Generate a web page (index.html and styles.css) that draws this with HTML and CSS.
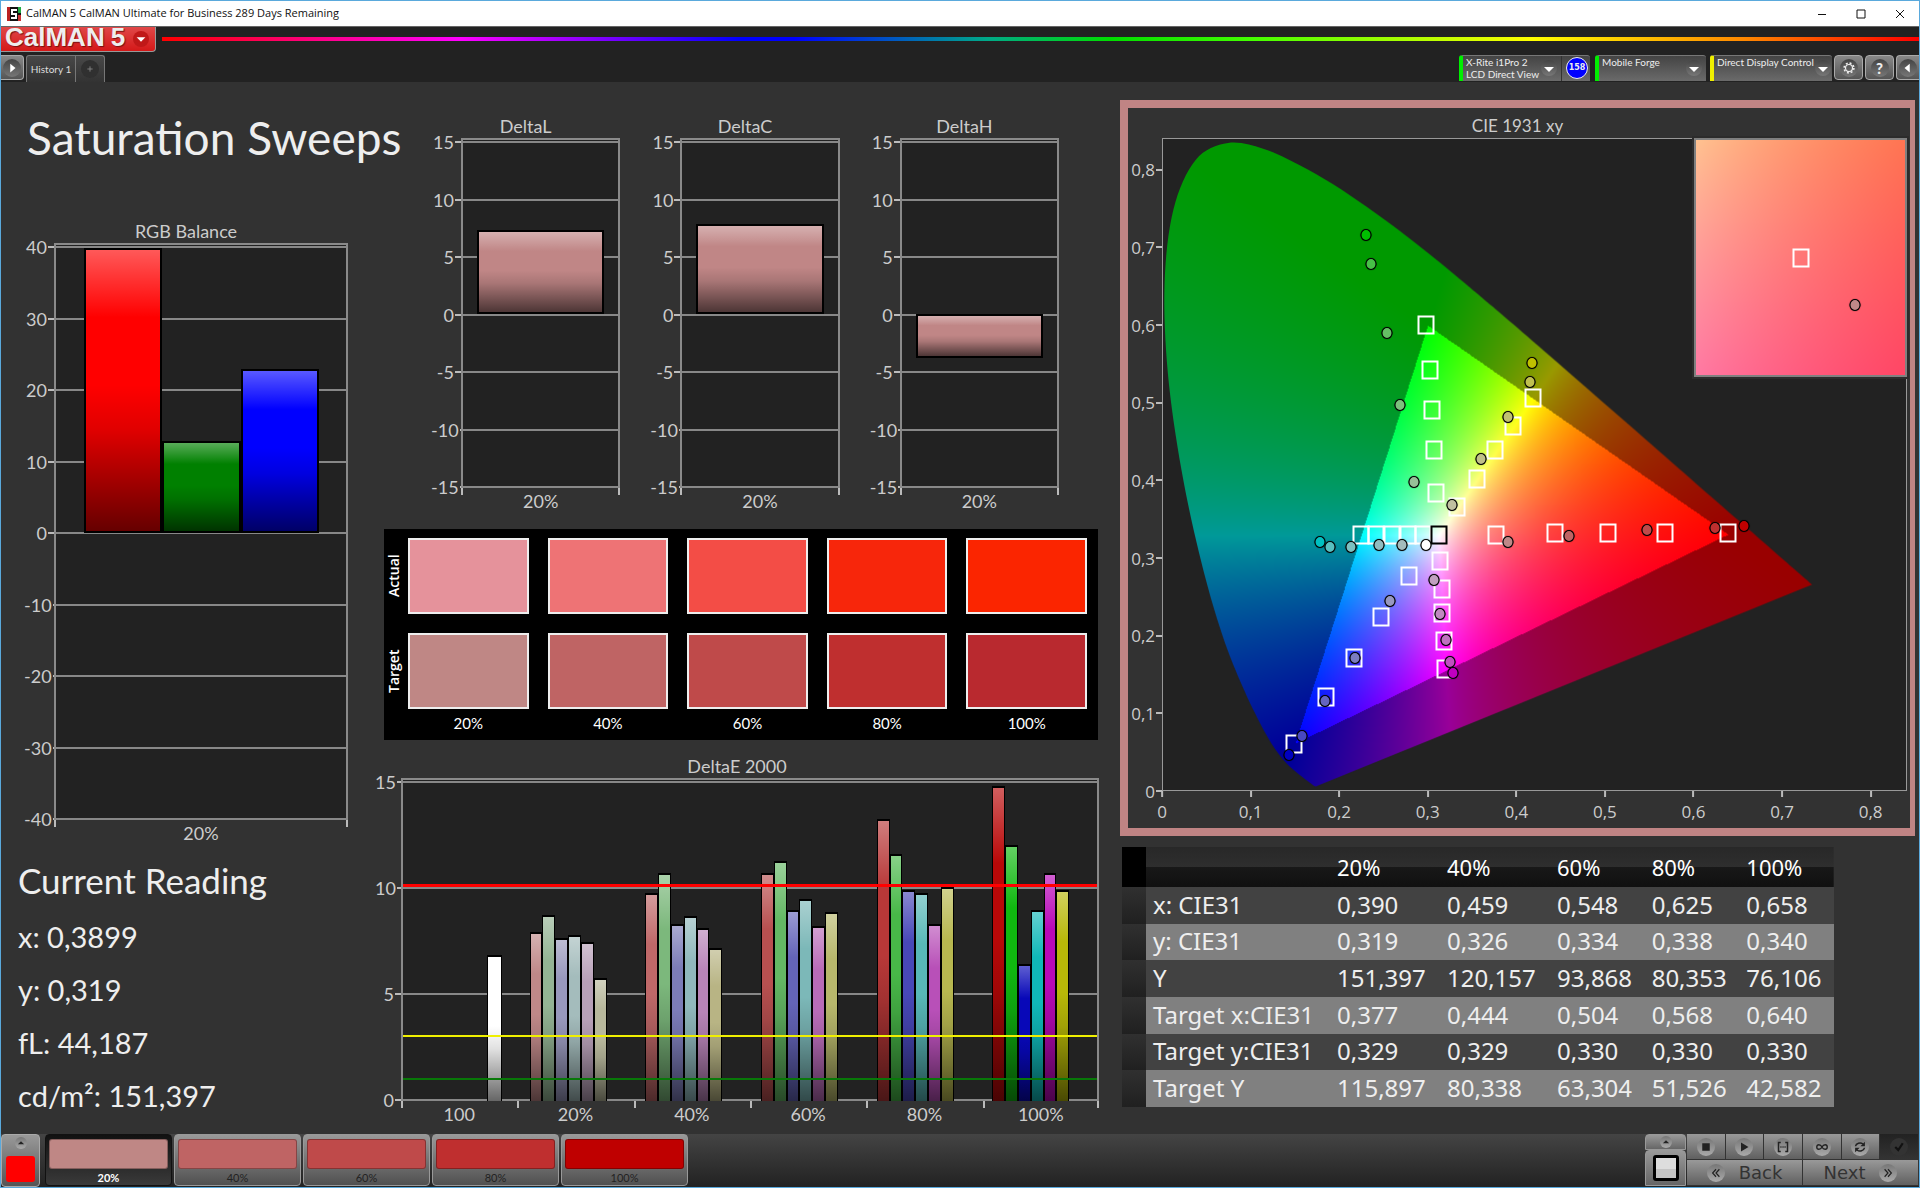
FILE: index.html
```html
<!DOCTYPE html>
<html lang="en">
<head>
<meta charset="utf-8">
<title>CalMAN 5 CalMAN Ultimate for Business 289 Days Remaining</title>
<link rel="stylesheet" href="styles.css">
</head>
<body>
<div class="app">
  <header class="titlebar">
    <svg class="app-icon" viewBox="0 0 14 14" aria-hidden="true"><rect width="14" height="14" fill="#111"/><path d="M0 0h3v14H0z" fill="#b22"/><path d="M11 0h3v6h-3z" fill="#2a4"/><path d="M11 8h3v6h-3z" fill="#c33"/><path d="M10 3H5v4h4v4H4" fill="none" stroke="#fff" stroke-width="2"/></svg>
    <span class="titlebar-text">CalMAN 5 CalMAN Ultimate for Business 289 Days Remaining</span>
    <div class="window-buttons">
      <button aria-label="Minimize"><svg viewBox="0 0 10 10"><path d="M1 5.5h8"/></svg></button>
      <button aria-label="Maximize"><svg viewBox="0 0 10 10"><path d="M1 1h8v8H1z"/></svg></button>
      <button aria-label="Close"><svg viewBox="0 0 10 10"><path d="M1 1l8 8M9 1L1 9"/></svg></button>
    </div>
  </header>

  <div class="brandbar">
    <button class="brand">CalMAN <span>5</span><i class="round"><svg viewBox="0 0 16 16"><path d="M3 6h10l-5 5z" fill="#fff"/></svg></i></button>
    <div class="rainbow"></div>
  </div>

  <nav class="tabbar">
    <button class="key key-left" aria-label="Expand"><i class="round"><svg viewBox="0 0 16 16"><path d="M6 3l6 5-6 5z" fill="#fff"/></svg></i></button>
    <div class="tabs">
      <button class="tab">History 1</button>
      <button class="tab tab-add" aria-label="Add"><i class="round"><svg viewBox="0 0 16 16"><path d="M8 5v6M5 8h6" stroke="#888"/></svg></i></button>
    </div>
    <div class="devices">
      <div class="device device-meter">
        <button class="device-main"><span>X-Rite i1Pro 2<br>LCD Direct View</span><i class="round"><svg viewBox="0 0 16 16"><path d="M3 7h10l-5 5z" fill="#fff"/></svg></i></button>
        <span class="badge">158</span>
      </div>
      <div class="device device-source"><button class="device-main"><span>Mobile Forge</span><i class="round"><svg viewBox="0 0 16 16"><path d="M3 7h10l-5 5z" fill="#fff"/></svg></i></button></div>
      <div class="device device-display"><button class="device-main"><span>Direct Display Control</span><i class="round"><svg viewBox="0 0 16 16"><path d="M3 7h10l-5 5z" fill="#fff"/></svg></i></button></div>
      <button class="key" aria-label="Settings"><i class="round"><svg viewBox="0 0 16 16"><circle cx="8" cy="8" r="4" fill="none" stroke="#eee" stroke-width="1.4"/><circle cx="8" cy="8" r="5.6" fill="none" stroke="#eee" stroke-width="1.8" stroke-dasharray="2.2 2.2"/></svg></i></button>
      <button class="key key-help" aria-label="Help"><i class="round">?</i></button>
      <button class="key key-right" aria-label="Collapse"><i class="round"><svg viewBox="0 0 16 16"><path d="M10 3L4 8l6 5z" fill="#fff"/></svg></i></button>
    </div>
  </nav>

  <main class="workspace">
    <section class="col col-left">
      <h1>Saturation Sweeps</h1>
      <div class="chart chart-rgb">
        <h3>RGB Balance</h3>
        <div class="yaxis"><span>40</span><span>30</span><span>20</span><span>10</span><span>0</span><span>-10</span><span>-20</span><span>-30</span><span>-40</span></div>
        <div class="plot">
          <div class="lines"><i></i><i></i><i></i><i></i><i></i><i></i><i></i><i></i><i></i></div>
          <div class="bars">
            <b class="bar" style="height:99%;background-color:#f00"></b>
            <b class="bar" style="height:32%;background-color:#008000"></b>
            <b class="bar" style="height:57%;background-color:#00f"></b>
          </div>
        </div>
        <div class="xaxis"><span>20%</span></div>
      </div>
      <div class="reading">
        <h2>Current Reading</h2>
        <p>x: 0,3899</p>
        <p>y: 0,319</p>
        <p>fL: 44,187</p>
        <p>cd/m²: 151,397</p>
      </div>
    </section>

    <section class="col col-mid">
      <div class="deltas">
        <div class="chart chart-delta">
          <h3>DeltaL</h3>
          <div class="yaxis"><span>15</span><span>10</span><span>5</span><span>0</span><span>-5</span><span>-10</span><span>-15</span></div>
          <div class="plot">
            <div class="lines"><i></i><i></i><i></i><i></i><i></i><i></i><i></i></div>
            <div class="bars"><b class="bar" style="height:48%"></b></div>
          </div>
          <div class="xaxis"><span>20%</span></div>
        </div>
        <div class="chart chart-delta">
          <h3>DeltaC</h3>
          <div class="yaxis"><span>15</span><span>10</span><span>5</span><span>0</span><span>-5</span><span>-10</span><span>-15</span></div>
          <div class="plot">
            <div class="lines"><i></i><i></i><i></i><i></i><i></i><i></i><i></i></div>
            <div class="bars"><b class="bar" style="height:52%"></b></div>
          </div>
          <div class="xaxis"><span>20%</span></div>
        </div>
        <div class="chart chart-delta">
          <h3>DeltaH</h3>
          <div class="yaxis"><span>15</span><span>10</span><span>5</span><span>0</span><span>-5</span><span>-10</span><span>-15</span></div>
          <div class="plot">
            <div class="lines"><i></i><i></i><i></i><i></i><i></i><i></i><i></i></div>
            <div class="bars bars-below"><b class="bar" style="height:25%"></b></div>
          </div>
          <div class="xaxis"><span>20%</span></div>
        </div>
      </div>

      <div class="patches">
        <span class="patch-name">Actual</span>
        <i style="background:#e5929b"></i><i style="background:#ee7375"></i><i style="background:#f34d46"></i><i style="background:#f7260b"></i><i style="background:#fb2500"></i>
        <span class="patch-name">Target</span>
        <i style="background:#bf8785"></i><i style="background:#bf6464"></i><i style="background:#bf4a4a"></i><i style="background:#bf2f2f"></i><i style="background:#b9292f"></i>
        <span></span><span>20%</span><span>40%</span><span>60%</span><span>80%</span><span>100%</span>
      </div>

      <div class="chart chart-de">
        <h3>DeltaE 2000</h3>
        <div class="yaxis"><span>15</span><span>10</span><span>5</span><span>0</span></div>
        <div class="plot">
          <div class="lines"><i></i><i></i><i></i><i></i></div>
          <div class="groups" id="deltae"></div>
          <div class="limits"><i class="limit-red"></i><i class="limit-yellow"></i><i class="limit-green"></i></div>
        </div>
        <div class="xaxis"><span>100</span><span>20%</span><span>40%</span><span>60%</span><span>80%</span><span>100%</span></div>
      </div>
    </section>

    <section class="col col-right">
      <div class="cie">
        <h3>CIE 1931 xy</h3>
        <div class="cie-y"><span>0,8</span><span>0,7</span><span>0,6</span><span>0,5</span><span>0,4</span><span>0,3</span><span>0,2</span><span>0,1</span><span>0</span></div>
        <div class="cie-plot" id="cie">
          <canvas id="locus" width="744" height="652"></canvas>
          <div class="inset" id="inset"><canvas id="zoom" width="212" height="238"></canvas></div>
        </div>
        <div class="cie-x"><span>0</span><span>0,1</span><span>0,2</span><span>0,3</span><span>0,4</span><span>0,5</span><span>0,6</span><span>0,7</span><span>0,8</span></div>
      </div>
      <table class="data">
        <colgroup><col class="c-mark"><col class="c-name"><col class="c-wide"><col class="c-wide"><col class="c-num"><col class="c-num"><col class="c-num"></colgroup>
        <thead><tr><td></td><th></th><th scope="col">20%</th><th scope="col">40%</th><th scope="col">60%</th><th scope="col">80%</th><th scope="col">100%</th></tr></thead>
        <tbody>
          <tr><td></td><th scope="row">x: CIE31</th><td>0,390</td><td>0,459</td><td>0,548</td><td>0,625</td><td>0,658</td></tr>
          <tr><td></td><th scope="row">y: CIE31</th><td>0,319</td><td>0,326</td><td>0,334</td><td>0,338</td><td>0,340</td></tr>
          <tr><td></td><th scope="row">Y</th><td>151,397</td><td>120,157</td><td>93,868</td><td>80,353</td><td>76,106</td></tr>
          <tr><td></td><th scope="row">Target x:CIE31</th><td>0,377</td><td>0,444</td><td>0,504</td><td>0,568</td><td>0,640</td></tr>
          <tr><td></td><th scope="row">Target y:CIE31</th><td>0,329</td><td>0,329</td><td>0,330</td><td>0,330</td><td>0,330</td></tr>
          <tr><td></td><th scope="row">Target Y</th><td>115,897</td><td>80,338</td><td>63,304</td><td>51,526</td><td>42,582</td></tr>
        </tbody>
      </table>
    </section>
  </main>

  <footer class="bottombar">
    <button class="source" aria-label="Pattern"><i class="round round-small"><svg viewBox="0 0 16 16"><path d="M3 10h10L8 5z" fill="#222"/></svg></i><i class="source-color"></i></button>
    <div class="steps">
      <button class="step step-on"><i style="background:#bf8785"></i>20%</button>
      <button class="step"><i style="background:#bf6464"></i>40%</button>
      <button class="step"><i style="background:#bf4a4a"></i>60%</button>
      <button class="step"><i style="background:#bf2f2f"></i>80%</button>
      <button class="step"><i style="background:#bf0000"></i>100%</button>
    </div>
    <div class="window-pick">
      <button aria-label="More"><i class="round round-small"><svg viewBox="0 0 16 16"><path d="M3 10h10L8 5z" fill="#222"/></svg></i></button>
      <button aria-label="Window size"><i class="square"></i></button>
    </div>
    <div class="transport">
      <button aria-label="Stop"><i class="round"><svg viewBox="0 0 16 16"><path d="M3 3h10v10H3z"/></svg></i></button>
      <button aria-label="Play"><i class="round"><svg viewBox="0 0 16 16"><path d="M4 2l10 6-10 6z"/></svg></i></button>
      <button aria-label="Read series"><i class="round"><svg viewBox="0 0 16 16"><path d="M5 2H2v12h3M11 2h3v12h-3" fill="none" stroke="#222" stroke-width="2"/><path d="M4.500 7h1.500v2H4.500zM7.300 7h1.500v2H7.300zM10 7h1.500v2H10z"/></svg></i></button>
      <button aria-label="Continuous"><i class="round"><svg viewBox="0 0 16 16"><path d="M8 8c-2-4-7-4-7 0s5 4 7 0 7-4 7 0-5 4-7 0z" fill="none" stroke="#222" stroke-width="1.800"/></svg></i></button>
      <button aria-label="Refresh"><i class="round"><svg viewBox="0 0 16 16"><path d="M2 7a6 5 0 0 1 10-3M14 9a6 5 0 0 1-10 3" fill="none" stroke="#222" stroke-width="2"/><path d="M14.500 1v6h-6zM1.500 15V9h6z"/></svg></i></button>
      <button class="off" aria-label="Accept"><i class="round"><svg viewBox="0 0 16 16"><path d="M3 8l4 4 6-9" fill="none" stroke="#111" stroke-width="3"/></svg></i></button>
      <button class="move"><i class="round"><svg viewBox="0 0 16 16"><path d="M8 3L3.500 8 8 13M12.500 3L8 8l4.500 5" fill="none" stroke="#222" stroke-width="1.600"/></svg></i>Back</button>
      <button class="move move-next">Next<i class="round"><svg viewBox="0 0 16 16"><path d="M3.500 3L8 8l-4.500 5M8 3l4.500 5L8 13" fill="none" stroke="#222" stroke-width="1.600"/></svg></i></button>
    </div>
  </footer>
</div>
<script src="charts.js"></script>
</body>
</html>
```
FILE: styles.css
```css
* { box-sizing: border-box; }

body {
  margin: 0;
  background: #323232;
  color: #eee;
  font-family: Lato, "Open Sans", sans-serif;
}

h1, h2, h3, p { margin: 0; font-weight: 400; }

button {
  margin: 0;
  padding: 0;
  border: 0;
  color: inherit;
  background: none;
  font: inherit;
}

svg { display: block; }

.app {
  display: flex;
  flex-direction: column;
  min-height: 100vh;
  border: 1px solid #5aa9dc;
}

.round {
  display: flex;
  flex: none;
  align-items: center;
  justify-content: center;
  width: 18px;
  height: 18px;
  border-radius: 50%;
  background: linear-gradient(#444, #777);
  font-style: normal;
}
.round svg { width: 14px; height: 14px; }
.round-small { width: 12px; height: 12px; }
.round-small svg { width: 10px; height: 10px; }

/* window frame */
.titlebar {
  display: flex;
  align-items: center;
  height: 25px;
  padding-left: 6px;
  background: #fff;
  color: #111;
  line-height: 23px;
}
.app-icon { width: 14px; height: 14px; margin-right: 5px; }
.titlebar-text { padding-bottom: 2px; font-family: "Open Sans", sans-serif; font-size: 11px; }
.window-buttons { display: flex; margin-left: auto; }
.window-buttons button {
  display: grid;
  place-items: center;
  width: 39px;
  height: 25px;
}
.window-buttons svg { width: 10px; height: 10px; fill: none; stroke: #111; }

.brandbar {
  display: flex;
  align-items: flex-start;
  gap: 6px;
  height: 29px;
  border-top: 1px solid #666;
  background: #222;
}
.brand {
  display: flex;
  align-items: center;
  gap: 6px;
  width: 155px;
  height: 25px;
  padding: 0 6px 4px 4px;
  border: solid #999;
  border-width: 0 1px 1px 0;
  border-radius: 0 0 4px 0;
  background: linear-gradient(#e04848, #d41818);
  color: #eee;
  font: bold 26px "Liberation Sans", sans-serif;
  line-height: 20px;
  text-shadow: 1px 1px 1px #711;
}
.brand .round { width: 16px; height: 16px; margin: 4px 0 0 auto; background: #c01818; }
.rainbow {
  flex: 1;
  height: 4px;
  margin-top: 10px;
  background: linear-gradient(90deg, #f00, #f0f 17%, #00f 33%, #00f 36%, #0a8 47%, #0d0 54%, #4f0 62%, #ff0 78%, #f80 90%, #f00);
}

.tabbar { display: flex; height: 27px; background: #222; font-size: 12px; line-height: 12px; }
.key {
  display: grid;
  place-items: center;
  width: 29px;
  height: 25px;
  border: 1px solid #aaa;
  border-radius: 4px;
  background: linear-gradient(#888, #555);
}
.key-left { width: 23px; border-left: 0; border-radius: 0 4px 4px 0; }
.key-right { width: 23px; border-right: 0; border-radius: 4px 0 0 4px; }
.key-help { font-weight: 900; font-size: 15px; }
.tabs { display: flex; margin-left: 2px; }
.tab {
  width: 50px;
  border: solid #777;
  border-width: 1px 1px 0;
  border-radius: 3px 0 0 0;
  background: linear-gradient(#484848, #333);
  color: #ddd;
  font-size: 10px;
  white-space: nowrap;
}
.tab-add { display: grid; place-items: center; width: 29px; border-left: 0; border-radius: 0 3px 0 0; }
.tab-add .round { background: #303030; }

.devices { display: flex; align-items: flex-start; gap: 2px; margin-left: auto; }
.device {
  display: flex;
  height: 26px;
  border-top: 1px solid #777;
  border-left: 4px solid #0e0;
  border-radius: 3px 3px 0 0;
  background: linear-gradient(#444, #6a6a6a);
}
.device-meter { width: 131px; margin-right: 3px; }
.device-source { width: 111px; margin-right: 2px; }
.device-display { width: 122px; border-left-color: #ee0; }
.device-main {
  display: flex;
  flex: 1;
  align-items: flex-start;
  justify-content: space-between;
  min-width: 0;
  padding: 0 4px 0 3px;
  font-size: 10px;
  line-height: 12px;
  text-align: left;
  white-space: nowrap;
}
.device-main .round { margin-top: 4px; width: 16px; height: 16px; }
.device-main .round svg { width: 16px; height: 16px; }
.device-meter .device-main { border-right: 1px solid #333; }
.device-display .device-main { padding-right: 1px; }
.badge {
  flex: none;
  width: 22px;
  height: 22px;
  margin: 1px 2px 0 4px;
  border: 1px solid #eee;
  border-radius: 50%;
  background: #00f;
  font: bold 8px/20px "DejaVu Sans", sans-serif;
  text-align: center;
}

/* workspace columns */
.workspace {
  display: grid;
  flex: 1;
  grid-template-columns: minmax(0, 374fr) minmax(0, 745fr) minmax(0, 799fr);
  align-items: start;
  padding-bottom: 6px;
  background: #323232;
}
.col-left h1 {
  padding: 25px 0 50px 26px;
  font-size: 46px;
  line-height: 62px;
  white-space: nowrap;
}
.reading { padding-left: 17px; font-size: 29px; line-height: 53px; }
.reading h2 { padding-top: 4px; font-size: 35px; line-height: 60px; }

/* bar charts */
.chart {
  display: grid;
  grid-template-columns: 30px minmax(0, 1fr);
  grid-template-rows: 24px auto 26px;
  color: #ccc;
  font-size: 18px;
}
.chart h3 { grid-column: 1 / 3; font-size: 18px; line-height: 24px; text-align: center; }
.yaxis { display: flex; flex-direction: column; justify-content: space-between; margin: -6px 0 -9px; }
.yaxis span {
  display: flex;
  align-items: center;
  justify-content: flex-end;
  gap: 1px;
  height: 20px;
  line-height: 20px;
}
.yaxis span::after { content: ""; width: 6px; height: 2px; background: #bbb; }
.plot {
  display: grid;
  grid-template: minmax(0, 1fr) / minmax(0, 1fr);
  border: 2px solid #8a8a8a;
  border-bottom: 0;
  background: #222;
}
.plot > * { grid-area: 1 / 1; }
.lines { display: flex; flex-direction: column; justify-content: space-between; padding-top: 1px; }
.lines i { height: 2px; background: #888; }
.xaxis { display: flex; grid-column: 2; }
.xaxis span {
  flex: 1;
  line-height: 26px;
  text-align: center;
  background: linear-gradient(#bbb, #bbb) left top / 2px 7px no-repeat;
}
.xaxis span:last-child {
  background:
    linear-gradient(#bbb, #bbb) left top / 2px 7px no-repeat,
    linear-gradient(#bbb, #bbb) right top / 2px 7px no-repeat;
}
.bars { display: flex; align-items: flex-end; height: 50%; }
.bars-below { align-self: end; align-items: flex-start; }
.bar {
  flex: 1;
  border: 2px solid #000;
  background-image: linear-gradient(rgba(255,255,255,.35), rgba(255,255,255,0) 24%, rgba(0,0,0,0) 48%, rgba(0,0,0,.12) 64%, rgba(0,0,0,.6));
}
.chart-rgb { margin: 0 27px 0 23px; }
.chart-rgb .plot { height: 577px; }
.chart-rgb .bars { padding: 0 27px 0 28px; }

.deltas {
  display: grid;
  grid-template-columns: repeat(3, minmax(0, 1fr));
  gap: 30px;
  padding: 32px 61px 0 56px;
}
.chart-delta .plot { height: 350px; }
.chart-delta .bars { padding: 0 14px; }
.chart-delta .bar { background-color: #c08686; }

.patches {
  display: grid;
  grid-template-columns: 5px repeat(5, minmax(0, 1fr));
  grid-template-rows: 76px 76px 28px;
  column-gap: 19px;
  row-gap: 19px;
  height: 211px;
  margin: 15px 22px 0 9px;
  padding: 9px 11px 0 0;
  background: #000;
  color: #fff;
  font-size: 15px;
  line-height: 28px;
  text-align: center;
}
.patches i { border: 2px solid #eee; }
.patches span:nth-last-child(-n+6) { margin-top: -19px; }
.patch-name {
  justify-self: start;
  font: 600 14px/20px "Open Sans", sans-serif;
  writing-mode: vertical-rl;
  transform: rotate(180deg);
}

.chart-de { grid-template-columns: 26px minmax(0, 1fr); margin: 14px 21px 0 0; }
.chart-de .plot { height: 323px; }
.groups { display: flex; }
.group { display: flex; flex: 1; align-items: flex-end; padding: 0 17px 0 11px; }
.group .bar, .group .gap { flex: 1; }
.group .bar { border-width: 2px 1px 0; }
.limits { display: grid; grid-template-rows: 107fr 150fr 43fr 21fr; }
.limits i { align-self: end; height: 2px; }
.limits .limit-red { height: 3px; background: #f00; }
.limit-yellow { background: #f0f000; }
.limit-green { background: #087808; }

/* chromaticity diagram */
.cie {
  display: grid;
  grid-template-columns: 34px minmax(0, 1fr);
  grid-template-rows: 30px 653px 37px;
  margin: 18px 4px 0 0;
  padding-right: 3px;
  border: 8px solid #c08484;
  border-right-width: 5px;
  color: #ccc;
  font: 18px "Open Sans", sans-serif;
}
.cie h3 { grid-column: 1 / 3; font: 17px/36px Lato, sans-serif; text-align: center; }
.cie-y { display: grid; grid-template-rows: 41fr repeat(8, 100fr); }
.cie-y span {
  display: flex;
  align-items: center;
  align-self: end;
  justify-content: flex-end;
  gap: 1px;
  height: 20px;
  font-size: 17px;
  transform: translateY(50%);
}
.cie-y span::after { content: ""; width: 6px; height: 2px; background: #bbb; }
.cie-plot { position: relative; border: 1px solid #999; background: #222; }
.cie-plot canvas { display: block; width: 100%; height: 100%; }
.cie-x { display: grid; grid-column: 2; grid-template-columns: repeat(8, minmax(0, 100fr)) minmax(0, 41fr); }
.cie-x span {
  justify-self: start;
  padding-top: 6px;
  font-size: 17px;
  line-height: 30px;
  background: linear-gradient(#bbb, #bbb) center top / 2px 6px no-repeat;
  transform: translateX(-50%);
}
.inset {
  position: absolute;
  top: -1px;
  right: -1px;
  width: 213px;
  height: 239px;
  border: 2px solid #808080;
  outline: 2px solid #2c2c2c;
}
.target, .measured { position: absolute; transform: translate(-50%, 50%); }
.target { width: 17px; height: 19px; border: 2px solid #fff; }
.target-white { border-color: #000; }
.measured { width: 11px; height: 12px; border: 1px solid #000; border-radius: 50%; box-shadow: 0 0 1px #000; }

/* readings table */
.data {
  width: 712px;
  max-width: calc(100% - 6px);
  height: 260px;
  margin: 11px 0 0 2px;
  border-collapse: collapse;
  table-layout: fixed;
  font: 24px/32px "Noto Sans", sans-serif;
  color: #eee;
}
.c-mark { width: 24px; }
.c-name { width: 184px; }
.c-wide { width: 110px; }
.data th, .data td { padding: 1px 0 2px 7px; font-weight: 400; text-align: left; white-space: nowrap; }
.data thead tr { height: 40px; background: linear-gradient(#282828, #2e2e2e 50%, #181818 50%, #101010); color: #fff; }
.data thead th { font-size: 22px; }
.data thead td { background: #000; }
.data tbody tr { background: #424242; }
.data tbody tr:nth-child(even) { background: #808080; }
.data tbody td:first-child { background: linear-gradient(#303030, #202020); }

/* bottom bar */
.bottombar {
  display: flex;
  height: 53px;
  background: linear-gradient(#444, #222);
  color: #222;
  font-size: 11px;
}
.bottombar .round { background: linear-gradient(#777, #aaa); }
.source {
  display: flex;
  flex-direction: column;
  align-items: center;
  justify-content: space-between;
  width: 39px;
  padding: 2px 4px 4px;
  border: 1px solid #aaa;
  border-radius: 4px;
  background: linear-gradient(#999, #555);
}
.source-color { width: 100%; height: 26px; border-radius: 3px; background: #f00; }
.steps { display: flex; gap: 2px; margin: 0 auto 1px 5px; }
.step {
  width: 127px;
  padding: 4px 3px 0;
  border: 1px solid #999;
  border-radius: 4px;
  background: linear-gradient(#999, #505050);
  line-height: 18px;
  text-align: center;
}
.step i { display: block; height: 30px; border: 1px solid rgba(0,0,0,.3); border-radius: 3px; }
.step-on { border-color: #111; background: linear-gradient(#111, #3a3a3a); color: #fff; font-weight: 700; }
.window-pick { display: grid; grid-template-rows: 16px 36px; width: 41px; margin-right: 1px; }
.window-pick button { display: grid; place-items: center; border: 1px solid #999; border-radius: 4px 4px 0 0; background: linear-gradient(#999, #666); }
.square { width: 26px; height: 26px; border: 3px solid #000; border-radius: 3px; background: linear-gradient(#ddd 55%, #c4c4c4 55%); }
.transport { display: grid; grid-template-columns: repeat(6, minmax(0, 1fr)); grid-template-rows: 26px 26px; width: 232px; }
.transport button {
  display: flex;
  align-items: center;
  justify-content: center;
  border: solid #333;
  border-width: 0 1px 1px 0;
  background: linear-gradient(#999, #606060);
}
.transport svg { width: 12px; height: 12px; fill: #222; }
.transport .off { background: linear-gradient(#222, #333); }
.transport .off .round { background: #333; }
.transport .move { grid-column: span 3; gap: 14px; font: 18px "DejaVu Sans", sans-serif; color: #333; }
```
FILE: charts.js
```js
// DeltaE 2000 bars: percent of plot height, series order R G B C M Y W
const series = [
  [[0, 0, 0, 0, 0, 0, 45.6], ["", "", "", "", "", "", "#fff"]],
  [[52.5, 58.1, 50.9, 51.6, 49.4, 38.4], ["#bf8888", "#94b494", "#9898bc", "#a4bcbc", "#b8a0b8", "#b8b89c"]],
  [[64.7, 70.9, 55.3, 57.5, 53.8, 47.8], ["#bf6868", "#7cb87c", "#7c7cb8", "#90b8bc", "#b884b8", "#b8b484"]],
  [[70.9, 74.7, 59.4, 62.8, 54.4, 58.8], ["#b85050", "#64b864", "#6464b8", "#7cb8b8", "#b86cb8", "#b8b86c"]],
  [[87.8, 76.9, 65.6, 64.7, 55.3, 66.6], ["#b83838", "#48b848", "#4848b8", "#58b8b8", "#b850b8", "#b8b850"]],
  [[98.1, 79.7, 42.8, 59.4, 70.9, 65.6], ["#b80808", "#10b810", "#0808b8", "#10b8b8", "#b808b8", "#b8b808"]]
];
const groups = document.getElementById("deltae");
for (const [values, colors] of series) {
  const group = document.createElement("div");
  group.className = "group";
  for (let i = 0; i < 7; i++) {
    const bar = document.createElement("b");
    bar.className = values[i] ? "bar" : "gap";
    if (values[i]) {
      bar.style.height = values[i] + "%";
      bar.style.backgroundColor = colors[i];
    }
    group.append(bar);
  }
  groups.append(group);
}

const SPAN = 0.841;

// xy chromaticity to Rec. 709 RGB, clamped; colours outside the gamut are dimmed
function colorAt(x, y) {
  const X = x / y, Z = (1 - x - y) / y;
  const rgb = [
    3.2406 * X - 1.5372 - 0.4986 * Z,
    -0.9689 * X + 1.8758 + 0.0415 * Z,
    0.0557 * X - 0.204 + 1.057 * Z
  ];
  const max = Math.max(...rgb);
  const level = Math.min(...rgb) < 0 ? 153 : 255;
  return rgb.map(v => Math.max(0, v / max) * level);
}

function fill(canvas, x0, x1, y0, y1) {
  const { width, height } = canvas;
  const ctx = canvas.getContext("2d");
  const image = ctx.createImageData(width, height);
  for (let j = 0; j < height; j++) {
    for (let i = 0; i < width; i++) {
      const y = y1 - (j + 0.5) / height * (y1 - y0);
      const c = colorAt(x0 + (i + 0.5) / width * (x1 - x0), y);
      image.data.set([c[0], c[1], c[2], 255], (j * width + i) * 4);
    }
  }
  ctx.putImageData(image, 0, 0);
}

const locus = [
  [.1741, .005], [.1714, .0051], [.1644, .0109], [.1566, .0177], [.144, .0297], [.1355, .0399], [.1241, .0578],
  [.1096, .0868], [.0903, .1327], [.067, .2007], [.0432, .295], [.021, .4127], [.0055, .5384], [.0018, .6548],
  [.0118, .7502], [.0369, .814], [.0735, .8358], [.1142, .8282], [.1547, .8072], [.1929, .7824], [.2296, .7543],
  [.2658, .7243], [.3016, .6923], [.3373, .6589], [.3731, .6245], [.4441, .5547], [.5125, .4866], [.5752, .4242],
  [.627, .3725], [.6658, .334], [.6915, .3083], [.719, .2809], [.7347, .2653]
];
const main = document.getElementById("locus");
fill(main, 0, SPAN, 0, SPAN);
const ctx = main.getContext("2d");
const pts = locus.map(([x, y]) => [x / SPAN * main.width, (1 - y / SPAN) * main.height]);
ctx.globalCompositeOperation = "destination-in";
ctx.beginPath();
ctx.moveTo(...pts[0]);
for (let i = 0; i < pts.length - 1; i++) {
  const a = pts[Math.max(0, i - 1)], b = pts[i], c = pts[i + 1], d = pts[Math.min(pts.length - 1, i + 2)];
  ctx.bezierCurveTo(b[0] + (c[0] - a[0]) / 6, b[1] + (c[1] - a[1]) / 6,
    c[0] - (d[0] - b[0]) / 6, c[1] - (d[1] - b[1]) / 6, c[0], c[1]);
}
ctx.closePath();
ctx.fill();

fill(document.getElementById("zoom"), .352, .402, .302, .357);

function mark(host, className, left, bottom, color) {
  const el = document.createElement("span");
  el.className = className;
  el.style.left = left + "%";
  el.style.bottom = bottom + "%";
  if (color) el.style.backgroundColor = color;
  host.append(el);
}

const cie = document.getElementById("cie");
const targets = [
  [.377, .33], [.444, .332], [.504, .332], [.568, .332], [.64, .332],
  [.298, .601], [.302, .543], [.304, .491], [.307, .439], [.309, .384],
  [.224, .33], [.241, .33], [.259, .33], [.277, .33], [.294, .33],
  [.148, .06], [.184, .12], [.216, .171], [.247, .224], [.279, .276],
  [.314, .296], [.316, .26], [.316, .229], [.318, .192], [.319, .156],
  [.333, .366], [.355, .402], [.376, .439], [.396, .47], [.419, .506]
];
for (const [x, y] of targets) mark(cie, "target", x / SPAN * 100, y / SPAN * 100);
mark(cie, "target target-white", .3127 / SPAN * 100, .33 / SPAN * 100);

const measured = [
  [.39, .321, "#bf8888"], [.459, .328, "#bf6464"], [.548, .336, "#bf4a4a"], [.625, .339, "#bf2f2f"], [.658, .341, "#c00000"],
  [.23, .717, "#00c000"], [.236, .679, "#48c048"], [.253, .59, "#64c064"], [.268, .497, "#7cc07c"], [.284, .398, "#98c098"],
  [.178, .321, "#00c0c0"], [.189, .314, "#58c0c0"], [.213, .314, "#7cc0c0"], [.244, .316, "#90bcc0"], [.27, .316, "#a4bcbc"],
  [.298, .316, "#fff"],
  [.143, .045, "#0000c0"], [.157, .07, "#4848c0"], [.183, .115, "#6464c0"], [.217, .171, "#7c7cc0"], [.257, .244, "#9898c0"],
  [.307, .271, "#c0a0c0"], [.314, .228, "#c088c0"], [.32, .194, "#c070c0"], [.325, .165, "#c050c0"], [.328, .151, "#c000c0"],
  [.327, .368, "#c0c0a0"], [.36, .428, "#c0c088"], [.391, .482, "#c0c070"], [.415, .527, "#c0c050"], [.418, .552, "#c0c000"]
];
for (const [x, y, color] of measured) mark(cie, "measured", x / SPAN * 100, y / SPAN * 100, color);

const inset = document.getElementById("inset");
mark(inset, "target", 50, 50);
mark(inset, "measured", 76, 30, "#bf8888");
```
